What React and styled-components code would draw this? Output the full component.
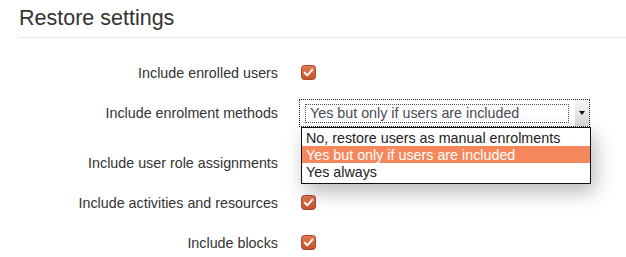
import React from "react";
import styled, { createGlobalStyle } from "styled-components";

const Global = createGlobalStyle`
  html, body { margin: 0; padding: 0; overflow: hidden; background: #fff; }
  body { font-family: "Liberation Sans", Arial, sans-serif; color: #333; }
`;

const Page = styled.div`
  padding-left: 19px;
  width: 607px;
`;

const Legend = styled.div`
  height: 37px;
  line-height: 37px;
  font-size: 21.5px;
  color: #333;
  border-bottom: 1px solid #e5e5e5;
  margin-bottom: 14px;
`;

const Row = styled.div`
  display: flex;
  align-items: center;
  height: 40px;
  margin-bottom: ${(p) => (p.$extra ? "10px" : "0")};
`;

const Label = styled.div`
  width: 259px;
  text-align: right;
  font-size: 14.3px;
  line-height: 20px;
  padding-top: 1px;
  color: #333;
  margin-right: 21px;
  white-space: nowrap;
`;

const Control = styled.div`
  position: relative;
  display: flex;
  align-items: center;
`;

const Box = styled.svg`
  display: block;
  margin-left: 2px;
  margin-top: 1px;
`;

const SelectBox = styled.div`
  position: relative;
  box-sizing: border-box;
  width: 291px;
  height: 28px;
  margin-top: 2px;
  border: 1px dotted #222;
  background: #fff;
  display: flex;
  align-items: center;
`;

const SelectValue = styled.div`
  box-sizing: border-box;
  margin-left: 5px;
  width: 264px;
  height: 19px;
  border: 1px dotted #555;
  padding-left: 4px;
  font-size: 14.3px;
  line-height: 17px;
  color: #4a4a55;
  white-space: nowrap;
`;

const ArrowButton = styled.div`
  margin-left: auto;
  align-self: stretch;
  width: 14px;
  background: linear-gradient(#f7f7f7, #d9d9d9);
  display: flex;
  align-items: center;
  justify-content: center;
`;

const Arrow = styled.span`
  width: 0;
  height: 0;
  border-left: 3px solid transparent;
  border-right: 3px solid transparent;
  border-top: 4px solid #111;
`;

const Dropdown = styled.div`
  position: absolute;
  top: calc(100% + 1px);
  left: 1px;
  box-sizing: border-box;
  width: 290px;
  border: 1px solid #111;
  background: #fff;
  padding: 1px 0 3px;
  box-shadow: 4px 8px 20px rgba(0, 0, 0, 0.28);
  z-index: 10;
`;

const Option = styled.div`
  height: 17px;
  line-height: 18px;
  font-size: 14.3px;
  padding-left: 4px;
  white-space: nowrap;
  color: ${(p) => (p.$active ? "#fff" : "#222")};
  background: ${(p) => (p.$active ? "#f4885c" : "transparent")};
`;

const Checkbox = () => (
  <Box width="15" height="15" viewBox="0 0 15 15">
    <defs>
      <linearGradient id="cbg" x1="0" y1="0" x2="0" y2="1">
        <stop offset="0" stopColor="#e57a52" />
        <stop offset="1" stopColor="#c4522b" />
      </linearGradient>
    </defs>
    <rect x="0.5" y="0.5" width="14" height="14" rx="3" fill="url(#cbg)" stroke="#a8452a" />
    <polyline
      points="3.6,7.6 6.3,10.3 11.4,4.6"
      fill="none"
      stroke="#fff"
      strokeWidth="2"
      strokeLinecap="round"
      strokeLinejoin="round"
    />
  </Box>
);

const options = [
  "No, restore users as manual enrolments",
  "Yes but only if users are included",
  "Yes always",
];

export default function App() {
  return (
    <Page>
      <Global />
      <Legend>Restore settings</Legend>
      <Row>
        <Label>Include enrolled users</Label>
        <Control>
          <Checkbox />
        </Control>
      </Row>
      <Row $extra>
        <Label>Include enrolment methods</Label>
        <Control>
          <SelectBox>
            <SelectValue>Yes but only if users are included</SelectValue>
            <ArrowButton>
              <Arrow />
            </ArrowButton>
            <Dropdown>
              {options.map((o, i) => (
                <Option key={o} $active={i === 1}>
                  {o}
                </Option>
              ))}
            </Dropdown>
          </SelectBox>
        </Control>
      </Row>
      <Row>
        <Label>Include user role assignments</Label>
        <Control />
      </Row>
      <Row>
        <Label>Include activities and resources</Label>
        <Control>
          <Checkbox />
        </Control>
      </Row>
      <Row>
        <Label>Include blocks</Label>
        <Control>
          <Checkbox />
        </Control>
      </Row>
    </Page>
  );
}
